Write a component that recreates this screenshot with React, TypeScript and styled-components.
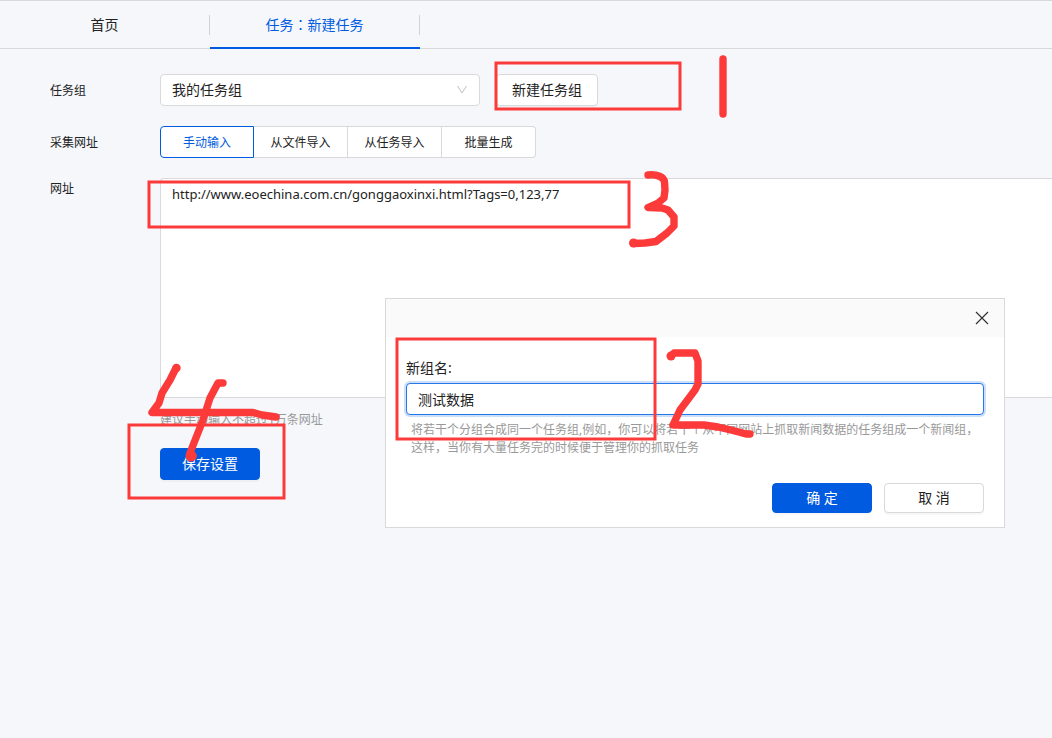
import React from 'react';
import styled, { createGlobalStyle } from 'styled-components';

const GlobalStyle = createGlobalStyle`
  * { box-sizing: border-box; }
  body {
    margin: 0;
    background: #f5f7fb;
    color: #222;
    font-family: "Noto Sans", "Noto Sans CJK SC", sans-serif;
    font-size: 14px;
  }
  button, input, select, textarea { font: inherit; color: inherit; margin: 0; }
`;

const Page = styled.div`
  position: relative;
  min-height: 100vh;
  overflow: hidden;
`;

const TabBar = styled.nav`
  display: flex;
  height: 49px;
  border-top: 1px solid #d9d9d9;
  border-bottom: 1px solid #d9d9d9;
`;

const Tab = styled.a<{ $active?: boolean }>`
  display: flex;
  align-items: center;
  width: 210px;
  height: 48px;
  padding-top: 2px;
  color: ${(p) => (p.$active ? '#005be0' : '#222')};
  border-bottom: 2px solid ${(p) => (p.$active ? '#005be0' : 'transparent')};
  text-decoration: none;
`;

const TabText = styled.span`
  flex: 1;
  line-height: 20px;
  text-align: center;
  border-right: 1px solid #d0d3d8;
`;

/* The full-width colon is set in the middle of its square. */
const Colon = styled.span`
  font-family: "Noto Sans CJK TC", sans-serif;
  line-height: 1;
`;

const Form = styled.form`
  display: flex;
  flex-direction: column;
  gap: 20px;
  padding: 25px 0 0 50px;
`;

const Row = styled.div<{ $top?: boolean }>`
  display: flex;
  align-items: ${(p) => (p.$top ? 'flex-start' : 'center')};
`;

const Label = styled.label`
  width: 110px;
  flex: none;
  padding-top: 2px;
  font-size: 12px;
  line-height: 18px;
`;

const SelectBox = styled.div`
  position: relative;
  width: 320px;
  margin-right: 16px;
  svg {
    position: absolute;
    right: 12px;
    top: 11px;
    pointer-events: none;
  }
`;

const Select = styled.select`
  display: block;
  appearance: none;
  width: 100%;
  height: 32px;
  padding: 0 32px 1px 11px;
  background: #fff;
  border: 1px solid #d9d9d9;
  border-radius: 4px;
`;

const Button = styled.button<{ $primary?: boolean; $height?: number }>`
  min-width: 100px;
  height: ${(p) => p.$height ?? 32}px;
  padding: 0 15px;
  line-height: 20px;
  color: ${(p) => (p.$primary ? '#fff' : '#222')};
  background: ${(p) => (p.$primary ? '#005be0' : '#fff')};
  border: 1px solid ${(p) => (p.$primary ? '#005be0' : '#d9d9d9')};
  border-radius: 4px;
  box-shadow: 0 2px 0 rgba(0, 0, 0, 0.03);
`;

const Segments = styled.div`
  display: flex;
`;

const Segment = styled.button<{ $active?: boolean }>`
  width: 94px;
  height: 32px;
  padding: 0;
  font-size: 12px;
  background: #fff;
  color: ${(p) => (p.$active ? '#005be0' : '#222')};
  border: 1px solid ${(p) => (p.$active ? '#005be0' : '#d9d9d9')};
  &:not(:first-child) { border-left: 0; }
  &:first-child { border-radius: 4px 0 0 4px; }
  &:last-child { border-radius: 0 4px 4px 0; }
`;

const UrlColumn = styled.div`
  flex: 1;
  min-width: 0;
`;

const UrlArea = styled.textarea`
  display: block;
  width: 100%;
  height: 220px;
  padding: 5px 11px;
  font-size: 13px;
  line-height: 20px;
  background: #fff;
  border: 1px solid #d9d9d9;
  border-right: 0;
  border-radius: 4px 0 0 4px;
  resize: none;
  outline: none;
`;

const Hint = styled.p`
  margin: 0;
  font-size: 12px;
  line-height: 18px;
  color: #999;
`;

const UrlHint = styled(Hint)`
  padding: 13px 0 19px;
`;

const Dialog = styled.section`
  position: absolute;
  left: 385px;
  top: 298px;
  width: 620px;
  background: #fff;
  border: 1px solid #d9d9d9;
`;

const DialogHead = styled.header`
  display: flex;
  justify-content: flex-end;
  height: 38px;
  padding-right: 14px;
  background: #fafafa;
`;

const CloseButton = styled.button`
  display: flex;
  align-items: center;
  justify-content: center;
  width: 16px;
  padding: 0;
  background: none;
  border: 0;
`;

const DialogBody = styled.div`
  padding: 20px 20px 14px;
`;

const NameLabel = styled.label`
  display: block;
  line-height: 22px;
`;

const NameInput = styled.input`
  display: block;
  width: 100%;
  height: 32px;
  margin: 4px 0 6px;
  padding: 0 11px;
  background: #fff;
  border: 1px solid #2478ec;
  border-radius: 4px;
  box-shadow: 0 0 0 2px #cddff8;
  outline: none;
`;

const DialogHint = styled(Hint)`
  padding: 0 0 0 5px;
`;

const Actions = styled.footer`
  display: flex;
  justify-content: flex-end;
  gap: 12px;
  padding-top: 26px;
`;

const Markup = styled.svg`
  position: absolute;
  left: 0;
  top: 0;
  overflow: visible;
  pointer-events: none;
`;

const RED = '#fc3a3a';

function Annotations() {
  return (
    <Markup width="760" height="510" viewBox="0 0 760 510" fill="none" stroke={RED} aria-hidden="true">
      <g strokeWidth="3">
        <rect x="496" y="63" width="184" height="46" />
        <rect x="149" y="182" width="480" height="45" />
        <rect x="397" y="339" width="258" height="100" />
        <rect x="129" y="425" width="155" height="73" />
      </g>
      <g strokeWidth="7.4" strokeLinecap="round" strokeLinejoin="round">
        <path d="M723 59V114" />
        <path d="M671 356L674 353H695L698 361V384L695 390L680 410L673 425H704L718 427L735 431L746 434H750" />
        <path d="M648 175C657 174 664 177 664.500 182L665 190L664 198L658 203L648 207.500L662 208L668 210L674 217V226L667 233L656 241.500L645 243L634 243.500" />
        <path d="M176 368L170 380L162 393L159 403L152 412.500H253L262 415L276 417" />
        <path d="M223 383H218L210 398L203 420L190 453V456H193" />
      </g>
      <g fill={RED} stroke="none">
        <circle cx="671" cy="356" r="4.500" />
        <circle cx="633.500" cy="243" r="4.500" />
        <circle cx="191" cy="456" r="5.500" />
        <circle cx="176.500" cy="368" r="4.200" />
      </g>
    </Markup>
  );
}

export default function App() {
  return (
    <Page>
      <GlobalStyle />
      <TabBar>
        <Tab href="#home"><TabText>首页</TabText></Tab>
        <Tab href="#task" $active><TabText>任务<Colon lang="zh-TW">：</Colon>新建任务</TabText></Tab>
      </TabBar>

      <Form onSubmit={(e) => e.preventDefault()}>
        <Row>
          <Label htmlFor="group">任务组</Label>
          <SelectBox>
            <Select id="group"><option>我的任务组</option></Select>
            <svg width="12" height="10" viewBox="0 0 12 10" fill="none" stroke="#bfbfbf">
              <path d="M1.500 1L6 8L10.500 1" />
            </svg>
          </SelectBox>
          <Button type="button">新建任务组</Button>
        </Row>
        <Row>
          <Label as="span" id="source">采集网址</Label>
          <Segments role="group" aria-labelledby="source">
            <Segment type="button" $active>手动输入</Segment>
            <Segment type="button">从文件导入</Segment>
            <Segment type="button">从任务导入</Segment>
            <Segment type="button">批量生成</Segment>
          </Segments>
        </Row>
        <Row $top>
          <Label htmlFor="urls">网址</Label>
          <UrlColumn>
            <UrlArea id="urls" spellCheck={false} defaultValue="http://www.eoechina.com.cn/gonggaoxinxi.html?Tags=0,123,77" />
            <UrlHint>建议手动输入不超过1万条网址</UrlHint>
            <Button type="submit" $primary>保存设置</Button>
          </UrlColumn>
        </Row>
      </Form>

      <Dialog role="dialog" aria-label="新组名">
        <DialogHead>
          <CloseButton type="button" aria-label="关闭">
            <svg width="14" height="14" viewBox="0 0 14 14" stroke="#333" strokeWidth="1.200">
              <path d="M1 1L13 13M13 1L1 13" />
            </svg>
          </CloseButton>
        </DialogHead>
        <DialogBody>
          <NameLabel htmlFor="name">新组名:</NameLabel>
          <NameInput id="name" defaultValue="测试数据" />
          <DialogHint lang="zh-CN">
            将若干个分组合成同一个任务组,例如，你可以将若干个从不同网站上抓取新闻数据的任务组成一个新闻组，
            <br />
            这样，当你有大量任务完的时候便于管理你的抓取任务
          </DialogHint>
          <Actions>
            <Button type="button" $primary $height={30}>确 定</Button>
            <Button type="button" $height={30}>取 消</Button>
          </Actions>
        </DialogBody>
      </Dialog>

      <Annotations />
    </Page>
  );
}
